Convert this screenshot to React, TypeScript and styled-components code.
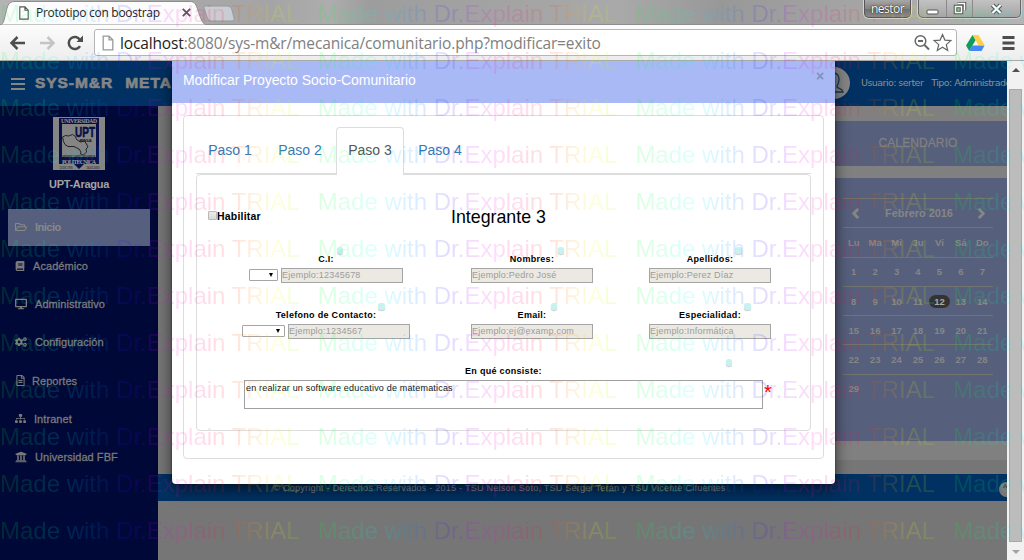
import React from 'react';
import styled, { createGlobalStyle } from 'styled-components';
import {
  FaRegFolderOpen, FaBook, FaDesktop, FaCogs, FaRegFileAlt, FaSitemap, FaUniversity, FaChevronLeft, FaChevronRight,
} from 'react-icons/fa';

const Global = createGlobalStyle`
  * { box-sizing: border-box; }
  body { margin: 0; font-family: "Liberation Sans", Arial, sans-serif; overflow: hidden; }
`;

const Screen = styled.div`
  position: relative;
  width: 1024px;
  height: 560px;
  overflow: hidden;
  display: flex;
  flex-direction: column;
`;

/* ---------- browser chrome ---------- */
const TitleBar = styled.div`
  position: relative;
  height: 25px;
  flex: none;
  display: flex;
  justify-content: space-between;
  background: linear-gradient(90deg, #b4b4b4 0, #a4a4a4 270px, #adadad 330px, #9d9d9d 370px, #a9a9a9 620px, #989898 720px, #a5a5a5 860px, #b5b5b5 100%);
  border-bottom: 1px solid #8d8d8d;
`;
const TabShape = styled.svg`
  position: absolute;
  left: 0;
  top: 0;
`;
const TabLabel = styled.div`
  position: relative;
  display: flex;
  align-items: center;
  height: 25px;
  padding-left: 18px;
  gap: 6px;
  font: 12px "Open Sans", sans-serif;
  color: #222;
`;
const TabText = styled.span`
  width: 140px;
  white-space: nowrap;
  letter-spacing: -0.28px;
`;
const WindowButtons = styled.div`
  display: flex;
  gap: 7px;
  padding-right: 3px;
`;
const UserButton = styled.div`
  width: 47px;
  height: 18px;
  border: 1px solid #555;
  border-top: 0;
  border-radius: 0 0 5px 5px;
  background: linear-gradient(#a7a7a7, #858585 50%, #6e6e6e 52%, #8a8a8a);
  box-shadow: 0 0 0 1px #d4d4d4;
  color: #fff;
  text-align: center;
  font: 12px/17px "Open Sans", sans-serif;
  letter-spacing: -0.5px;
  text-shadow: 0 0 2px #222, 0 0 1px #222;
`;
const WinGroup = styled.div`
  display: flex;
  width: 103px;
  height: 18px;
  border: 1px solid #666;
  border-top: 0;
  border-radius: 0 0 5px 5px;
  background: linear-gradient(#c2c2c2, #a5a5a5);
  box-shadow: 0 0 0 1px #d0d0d0;
`;
const WinCell = styled.div<{ $w: number }>`
  width: ${(p) => p.$w}px;
  display: flex;
  align-items: center;
  justify-content: center;
  border-right: 1px solid #8a8a8a;
  &:last-child { border-right: 0; }
`;
const Toolbar = styled.div`
  height: 36px;
  flex: none;
  display: flex;
  align-items: center;
  padding-left: 9px;
  background: linear-gradient(#fcfcfc, #ededed);
  border-bottom: 1px solid #a9a9a9;
`;
const NavIcons = styled.svg` flex: none; `;
const UrlBox = styled.div`
  display: flex;
  align-items: center;
  flex: none;
  width: 863px;
  height: 27px;
  margin-left: 4px;
  padding: 0 3px 0 7px;
  background: #fff;
  border: 1px solid #b5b5b5;
  border-radius: 3px;
`;
const Url = styled.div`
  flex: 1;
  margin-left: 6px;
  white-space: nowrap;
  font: 15.5px/24px "Open Sans", sans-serif;
  letter-spacing: -0.14px;
  color: #808080;
  b { font-weight: 400; color: #222; }
`;
const Menus = styled.svg`
  flex: none;
  margin-left: 9px;
`;

/* ---------- page ---------- */
const Page = styled.div`
  position: relative;
  flex: 1;
  display: flex;
  overflow: hidden;
`;
const Body = styled.div`
  width: 1007px;
  display: flex;
  flex-direction: column;
  background: #767676;
`;
const Header = styled.header`
  height: 45px;
  flex: none;
  display: flex;
  align-items: center;
  padding: 0 0 2px 11px;
  background: #003162;
  color: #858585;
  overflow: hidden;
`;
const Bars = styled.div`
  width: 14px;
  height: 12px;
  flex: none;
  border-top: 2.5px solid #858585;
  border-bottom: 2.5px solid #858585;
  display: flex;
  align-items: center;
  margin-top: 2px;
  &::before { content: ''; flex: 1; height: 2px; background: #858585; }
`;
const Brand = styled.div`
  width: 805px;
  flex: none;
  margin-left: 10px;
  font: bold 15.5px "Liberation Sans", sans-serif;
  -webkit-text-stroke: 0.7px #858585;
  letter-spacing: 0.95px;
  word-spacing: 0.8px;
  white-space: pre;
`;
const Avatar = styled.svg`
  flex: none;
  margin-left: -22px;
`;
const UserInfo = styled.div`
  margin-left: 11px;
  margin-top: -1px;
  display: flex;
  gap: 8px;
  white-space: nowrap;
  font: 9.5px "DejaVu Sans", sans-serif;
  letter-spacing: -0.55px;
  color: #8f8f8f;
`;
const Columns = styled.div`
  flex: 1;
  display: flex;
`;
const Sidebar = styled.nav`
  width: 158px;
  padding: 11px 8px 0;
  background: #000837;
  display: flex;
  flex-direction: column;
`;
const Crest = styled.svg`
  margin-left: 45px;
  flex: none;
`;
const School = styled.div`
  margin: 7px 0 17px;
  height: 15px;
  text-align: center;
  font: bold 11px/15px "Liberation Sans", sans-serif;
  letter-spacing: -0.3px;
  color: #a3a3a3;
`;
const MenuItem = styled.div<{ $active?: boolean; $gap: number }>`
  display: flex;
  align-items: center;
  height: ${(p) => (p.$active ? 37 : 38.2)}px;
  flex: none;
  margin-bottom: ${(p) => (p.$active ? 1 : 0)}px;
  padding: 0 0 ${(p) => (p.$active ? 2 : 0)}px 7px;
  gap: ${(p) => p.$gap}px;
  background: ${(p) => (p.$active ? '#565f7d' : 'transparent')};
  color: ${(p) => (p.$active ? '#888' : '#7a7a7a')};
  font: ${(p) => (p.$active ? 'bold ' : '')}11px "Liberation Sans", sans-serif;
  -webkit-text-stroke: ${(p) => (p.$active ? 0 : 0.3)}px #7a7a7a;
  letter-spacing: ${(p) => (p.$active ? -0.5 : 0.06)}px;
  white-space: nowrap;
`;
const Main = styled.main`
  flex: 1;
  display: flex;
  flex-direction: column;
`;
const Content = styled.div`
  height: 354px;
  margin-left: 15px;
  padding-top: 15px;
  display: flex;
  flex-direction: column;
  align-items: flex-end;
  background: #808080;
`;
const CalTitle = styled.div`
  width: 178px;
  height: 45px;
  flex: none;
  background: #565f7c;
  color: #808080;
  text-align: center;
  font: 12px/44px "Liberation Sans", sans-serif;
  letter-spacing: 0.1px;
  -webkit-text-stroke: 0.3px #808080;
`;
const CalPanel = styled.div`
  width: 178px;
  height: 263px;
  margin-top: 12px;
  padding: 20px 14px 0;
  background: #565f7c;
`;
const CalRow = styled.div`
  display: grid;
  grid-template-columns: repeat(7, 1fr);
  align-items: center;
  justify-items: center;
  height: 29.3px;
  border-top: 1px solid #737370;
  color: #868686;
  font: bold 9.5px "Liberation Sans", sans-serif;
`;
const CalHead = styled(CalRow)`
  grid-template-columns: 25px 1fr 23px;
  font-size: 11px;
  letter-spacing: -0.05px;
  svg { font-size: 11px; stroke: #868686; stroke-width: 50px; }
`;
const Day = styled.span<{ $today?: boolean }>`
  padding: 1px 5px;
  border-radius: 8px;
  background: ${(p) => (p.$today ? '#333' : 'transparent')};
  color: ${(p) => (p.$today ? '#aaa' : 'inherit')};
`;
const Footer = styled.footer`
  display: flex;
  justify-content: center;
  position: relative;
  height: 27px;
  margin-top: 14px;
  padding: 8px 166px 0 0;
  background: #003162;
  color: #8a8a8a;
  font: 9px/13px "Liberation Sans", sans-serif;
  letter-spacing: 0.26px;
  overflow: hidden;
`;
const TopButton = styled.div`
  position: absolute;
  left: 841px;
  top: 8px;
  width: 15px;
  height: 15px;
  border-radius: 8px;
  background: #777;
  color: #222;
  font-size: 9px;
  line-height: 13px;
  padding-left: 4px;
`;
const ScrollTrack = styled.div`
  width: 17px;
  padding: 7px 2px 6px;
  display: flex;
  flex-direction: column;
  align-items: center;
  background: #f1f1f1;
`;
const Thumb = styled.div`
  flex: 1;
  width: 13px;
  margin: 17px 0 8px;
  background: #bcbcbc;
  border: 1px solid #a8a8a8;
`;
const Arrow = styled.div<{ $up?: boolean }>`
  border: 4px solid transparent;
  border-width: ${(p) => (p.$up ? '0 4px 4px' : '4px 4px 0')};
  border-${(p) => (p.$up ? 'bottom' : 'top')}-color: ${(p) => (p.$up ? '#505050' : '#a3a3a3')};
`;

/* ---------- modal ---------- */
const Modal = styled.section`
  position: absolute;
  left: 172px;
  top: 0;
  width: 663px;
  height: 423px;
  background: #fff;
  border-radius: 0 0 4px 4px;
  box-shadow: 0 5px 15px rgba(0, 0, 0, 0.6), 0 0 2px rgba(0, 0, 0, 0.6);
`;
const ModalHead = styled.div`
  display: flex;
  justify-content: space-between;
  height: 42px;
  padding: 0 11px;
  background: #a9b9f5;
  color: #fff;
  font: 14px/38px "Liberation Sans", sans-serif;
  letter-spacing: -0.06px;
`;
const Close = styled.span`
  font: bold 14px/31px "Liberation Sans", sans-serif;
  color: #8390bf;
`;
const Well = styled.div`
  margin: 12px 11px 0;
  height: 344px;
  padding: 11px 12px;
  border: 1px solid #ddd;
  border-radius: 4px;
`;
const Tabs = styled.div`
  display: flex;
  gap: 2px;
  height: 47px;
  border-bottom: 1px solid #ddd;
`;
const Tab = styled.div<{ $active?: boolean }>`
  width: 68px;
  height: ${(p) => (p.$active ? 48 : 46)}px;
  text-align: center;
  border: 1px solid ${(p) => (p.$active ? '#ddd' : 'transparent')};
  border-bottom: 0;
  border-radius: 4px 4px 0 0;
  background: ${(p) => (p.$active ? '#fff' : 'transparent')};
  color: ${(p) => (p.$active ? '#555' : '#337ab7')};
  font: 14px/44px "Liberation Sans", sans-serif;
`;
const Panel = styled.div`
  height: 257px;
  border: 1px solid #ddd;
  border-radius: 4px;
  color: #000;
`;
const PanelHead = styled.div`
  display: flex;
  align-items: center;
  height: 70px;
  padding: 13px 0 0 11px;
  font: bold 10.5px "Liberation Sans", sans-serif;
  letter-spacing: 0.2px;
`;
const Check = styled.i`
  width: 9px;
  height: 9px;
  margin: -2px 0 0;
  border: 1px solid #b8b8b8;
  border-radius: 1px;
  background: linear-gradient(#ececec, #d9d9d9);
`;
const Habilitar = styled.span`
  width: 234px;
  margin-top: -1px;
`;
const StepTitle = styled.span`
  font: 17.8px "Liberation Sans", sans-serif;
  letter-spacing: 0;
  margin-top: 2px;
`;
const Fields = styled.div`
  display: grid;
  grid-template-columns: 188px 224px 132px;
  grid-auto-rows: 56px;
  padding-left: 35px;
`;
const Field = styled.div`
  display: flex;
  flex-direction: column;
  align-items: center;
  padding-top: 8px;
`;
const Label = styled.div`
  position: relative;
  height: 15px;
  white-space: nowrap;
  font: bold 9px/12px "Liberation Sans", sans-serif;
  letter-spacing: 0.3px;
`;
const Dot = styled.i<{ $gap: number }>`
  position: absolute;
  left: calc(100% + ${(p) => p.$gap}px);
  top: -6px;
  width: 6.5px;
  height: 6.5px;
  border-radius: 2.5px;
  background: #c6f3f2;
  box-shadow: 0 1px 1px #ccc;
`;
const Controls = styled.div`
  display: flex;
  gap: 3px;
`;
const Select = styled.div<{ $w: number }>`
  width: ${(p) => p.$w}px;
  height: 12px;
  margin-top: 1px;
  border: 1px solid #a5a5a5;
  border-radius: 1px;
  display: flex;
  justify-content: flex-end;
  align-items: center;
  padding-right: 4px;
  &::after { content: ''; border: 2.5px solid transparent; border-top: 4px solid #000; border-bottom: 0; }
`;
const Input = styled.div`
  width: 122px;
  height: 15px;
  border: 1px solid #a5a5a5;
  background: #ebe9e2;
  color: #9c9c9c;
  font: 9px/12px "Liberation Sans", sans-serif;
  letter-spacing: 0.22px;
  white-space: nowrap;
`;
const Wide = styled.div`
  display: flex;
  flex-direction: column;
  align-items: flex-start;
  padding: 8px 0 0 47px;
`;
const WideLabel = styled(Label)` margin-left: 221px; `;
const AreaRow = styled.div`
  display: flex;
  gap: 1px;
  color: #f00;
  font: 20px/25px "Liberation Sans", sans-serif;
`;
const Area = styled.div`
  width: 519px;
  height: 29px;
  padding-left: 1px;
  border: 1px solid #a0a0a0;
  color: #111;
  font: 9px/14px "Liberation Sans", sans-serif;
  letter-spacing: 0.18px;
`;

/* ---------- watermark ---------- */
const Marks = styled.div`
  position: absolute;
  inset: -12px 0 0;
  overflow: hidden;
  pointer-events: none;
  opacity: 0.135;
`;
const MarkRow = styled.div`
  display: flex;
  height: 47px;
  width: 1272px;
`;
const Mark = styled.span`
  width: 317.7px;
  flex: none;
  font: 24px/51px "Liberation Sans", sans-serif;
  white-space: nowrap;
  color: transparent;
  background: linear-gradient(90deg, #0f2, #0f8 30px, #0ff 60px, #08f 95px, #30f 130px, #a0f 150px, #f0d 175px, #f06 205px, #f20 230px, #f80 250px, #ff0 275px, #8f0 300px, #2f0);
  -webkit-background-clip: text;
  background-clip: text;
`;

const menu: [React.ReactNode, string, number, boolean?][] = [
  [<FaRegFolderOpen size={12} />, 'Inicio', 8, true],
  [<FaBook size={10} />, 'Académico', 8],
  [<FaDesktop size={12} />, 'Administrativo', 8],
  [<FaCogs size={12} />, 'Configuración', 8],
  [<FaRegFileAlt size={11} />, 'Reportes', 6],
  [<FaSitemap size={11} />, 'Intranet', 8],
  [<FaUniversity size={12} />, 'Universidad FBF', 8],
];

const fields: [string, string, number, number?][] = [
  ['C.I:', 'Ejemplo:12345678', 3, 29],
  ['Nombres:', 'Ejemplo:Pedro José', 3.5],
  ['Apellidos:', 'Ejemplo:Perez Díaz', 2],
  ['Telefono de Contacto:', 'Ejemplo:1234567', 2, 43],
  ['Email:', 'Ejemplo:ej@examp.com', 4.5],
  ['Especialidad:', 'Ejemplo:Informática', 3.5],
];

const weeks = [0, 1, 2, 3, 4].map((w) => [1, 2, 3, 4, 5, 6, 7].map((d) => w * 7 + d).filter((d) => d < 30));

function PageIcon({ w, h, color }: { w: number; h: number; color: string }) {
  return (
    <svg width={w} height={h} viewBox="0 0 11 15" fill="#fff" stroke={color} strokeWidth="1.2">
      <path d="M1 1h5.5L10 4.500V14H1zM6.500 1v3.500H10" />
    </svg>
  );
}

function Logo() {
  return (
    <Crest width="52" height="53" viewBox="0 0 52 53">
      <rect width="52" height="53" fill="#858585" />
      <path d="M6 1h40v46H31l-5 5-5-5H6z" fill="#071049" />
      <path d="M9 7h34v33H9z" fill="#858585" />
      <g fontFamily="Liberation Serif, serif" fontWeight="700" textAnchor="middle">
        <text x="26" y="5.800" fontSize="5.600" fill="#999" textLength="36">UNIVERSIDAD</text>
        <text x="26" y="47" fontSize="6" fill="#999" textLength="34">POLITECNICA</text>
      </g>
      <g fontFamily="Liberation Sans, sans-serif" fontWeight="700" textAnchor="middle">
        <text x="32" y="19.500" fontSize="15" fill="#071049" stroke="#071049" strokeWidth=".6" textLength="20" lengthAdjust="spacingAndGlyphs">UPT</text>
        <text x="32.500" y="24.500" fontSize="4" fill="#222" textLength="13">ARAGUA</text>
        <text x="26" y="41" fontSize="3.500" fill="#222" textLength="33" lengthAdjust="spacingAndGlyphs">FEDERICO BRITO FIGUEROA</text>
        <text x="13" y="52" fontSize="3.500" fill="#333" textLength="13" lengthAdjust="spacingAndGlyphs">12 DIC 1976</text>
        <text x="40" y="52" fontSize="3.500" fill="#333" textLength="13" lengthAdjust="spacingAndGlyphs">14.03.2010</text>
      </g>
      <path d="M9.500 20l3-1.500 3 .5 4-1.500 3 2 1 3 4 2.500 4-1 2 3 1.500 3-2 2 .5 3-3 3-3-1 .5-2-2-3-5-2.500-6 0-3-2-1.500-3z" fill="none" stroke="#222" strokeWidth="1" />
    </Crest>
  );
}

export default function App() {
  return (
    <Screen>
      <Global />
      <TitleBar>
        <TabShape width="240" height="25">
          <path d="M0 25C4 24 4 20 6 12S9 2 14 1.500H190c5 0 6 3 8 9s4 13 8 14.500z" fill="#fcfcfc" stroke="#8d8d8d" />
          <path d="M203.500 6H227c3 0 4 1 5 4l2 8c.500 2 0 3-2 3h-20c-3 0-4-1-5-4z" fill="#c9ccd2" stroke="#999" />
        </TabShape>
        <TabLabel>
          <PageIcon w={12} h={14} color="#555" />
          <TabText>Prototipo con boostrap</TabText>
          <svg width="9" height="9" viewBox="0 0 9 9" stroke="#555" strokeWidth="1.700"><path d="M.8.8l7.400 7.400M8.200.8L.8 8.200" /></svg>
        </TabLabel>
        <WindowButtons>
          <UserButton>nestor</UserButton>
          <WinGroup>
            <WinCell $w={28}><svg width="13" height="16"><rect x="1" y="9" width="11" height="4" rx="1" fill="#fff" stroke="#555" /></svg></WinCell>
            <WinCell $w={27}>
              <svg width="14" height="14" fill="none"><path d="M4.500 1.500h7v7M2.500 4.500h6v6h-6z" stroke="#555" strokeWidth="3.500" /><path d="M4.500 1.500h7v7M2.500 4.500h6v6h-6z" stroke="#fff" strokeWidth="1.500" /></svg>
            </WinCell>
            <WinCell $w={47}>
              <svg width="13" height="12"><path d="M2.500 2l8 8M10.500 2l-8 8" stroke="#555" strokeWidth="4.500" /><path d="M2.500 2l8 8M10.500 2l-8 8" stroke="#fff" strokeWidth="2.300" /></svg>
            </WinCell>
          </WinGroup>
        </WindowButtons>
      </TitleBar>
      <Toolbar>
        <NavIcons width="81" height="20" fill="none" strokeWidth="2.500">
          <path d="M16 10H3M8.500 4l-6 6 6 6" stroke="#4d4d4d" />
          <path d="M31 10h13M38.500 4l6 6-6 6" stroke="#c4c4c4" />
          <path d="M71 13a6 6 0 1 1 0-6" stroke="#4d4d4d" />
          <path d="M74 2.500v6.500h-6.500z" fill="#4d4d4d" />
        </NavIcons>
        <UrlBox>
          <PageIcon w={12} h={16} color="#999" />
          <Url><b>localhost</b>:8080/sys-m&amp;r/mecanica/comunitario.php?modificar=exito</Url>
          <svg width="40" height="22" fill="none" stroke="#666">
            <circle cx="7.500" cy="9" r="5.300" strokeWidth="1.500" />
            <path d="M5 9h5M11.500 13l4.500 4.500" strokeWidth="2" />
            <path d="M29.500 2.500l2.400 5.600 6 .5-4.600 4 1.400 5.900-5.200-3.200-5.200 3.200 1.400-5.900-4.600-4 6-.5z" strokeWidth="1.200" />
          </svg>
        </UrlBox>
        <Menus width="58" height="20">
          <path d="M6.500 2h6l6 10h-6z" fill="#ffcf48" />
          <path d="M6.500 2l3 5.200L3.200 18 0 12.500z" fill="#0f9d58" />
          <path d="M6.300 12.500h12.300L15.500 18H3.200z" fill="#4688f4" />
          <path d="M36.500 4.500h12M36.500 10h12M36.500 15.500h12" stroke="#4d4d4d" strokeWidth="2.800" />
        </Menus>
      </Toolbar>
      <Page>
        <Body>
          <Header>
            <Bars />
            <Brand>{'SYS-M&R  METALMECANICA'}</Brand>
            <Avatar width="32" height="32" viewBox="0 0 32 32">
              <circle cx="16" cy="16" r="16" fill="#858585" />
              <path d="M11 12a5 6 0 0 1 10 0c0 5-2 6-2 8 1 2 5 1 6 5H7c1-4 5-3 6-5 0-2-2-3-2-8z" fill="#858585" stroke="#14395f" strokeWidth="1.300" />
            </Avatar>
            <UserInfo><span>Usuario: serter</span><span>Tipo: Administrador</span></UserInfo>
          </Header>
          <Columns>
            <Sidebar>
              <Logo />
              <School>UPT-Aragua</School>
              {menu.map(([icon, text, gap, active]) => (
                <MenuItem key={text} $gap={gap} $active={active}>{icon}{text}</MenuItem>
              ))}
            </Sidebar>
            <Main>
              <Content>
                <CalTitle>CALENDARIO</CalTitle>
                <CalPanel>
                  <CalHead><FaChevronLeft /><span>Febrero 2016</span><FaChevronRight /></CalHead>
                  <CalRow>{['Lu', 'Ma', 'Mi', 'Ju', 'Vi', 'Sá', 'Do'].map((d) => <span key={d}>{d}</span>)}</CalRow>
                  {weeks.map((w) => (
                    <CalRow key={w[0]}>{w.map((d) => <Day key={d} $today={d === 12}>{d}</Day>)}</CalRow>
                  ))}
                </CalPanel>
              </Content>
              <Footer>
                © Copyright - Derechos Reservados - 2015 - TSU Nelson Soto, TSU Sergei Terán y TSU Vicente Cifuentes
                <TopButton>^</TopButton>
              </Footer>
            </Main>
          </Columns>
        </Body>
        <ScrollTrack>
          <Arrow $up />
          <Thumb />
          <Arrow />
        </ScrollTrack>
        <Modal>
          <ModalHead>
            <span>Modificar Proyecto Socio-Comunitario</span>
            <Close>×</Close>
          </ModalHead>
          <Well>
            <Tabs>
              {[1, 2, 3, 4].map((n) => <Tab key={n} $active={n === 3}>Paso {n}</Tab>)}
            </Tabs>
            <Panel>
              <PanelHead>
                <Check />
                <Habilitar>Habilitar</Habilitar>
                <StepTitle>Integrante 3</StepTitle>
              </PanelHead>
              <Fields>
                {fields.map(([label, hint, gap, select]) => (
                  <Field key={label}>
                    <Label>{label}<Dot $gap={gap} /></Label>
                    <Controls>
                      {select && <Select $w={select} />}
                      <Input>{hint}</Input>
                    </Controls>
                  </Field>
                ))}
              </Fields>
              <Wide>
                <WideLabel>En qué consiste:<Dot $gap={184} /></WideLabel>
                <AreaRow>
                  <Area>en realizar un software educativo de matematicas</Area>*
                </AreaRow>
              </Wide>
            </Panel>
          </Well>
        </Modal>
      </Page>
      <Marks>
        {Array.from({ length: 12 }, (_, r) => (
          <MarkRow key={r}>
            {[0, 1, 2, 3].map((c) => <Mark key={c}>Made with Dr.Explain TRIAL</Mark>)}
          </MarkRow>
        ))}
      </Marks>
    </Screen>
  );
}
